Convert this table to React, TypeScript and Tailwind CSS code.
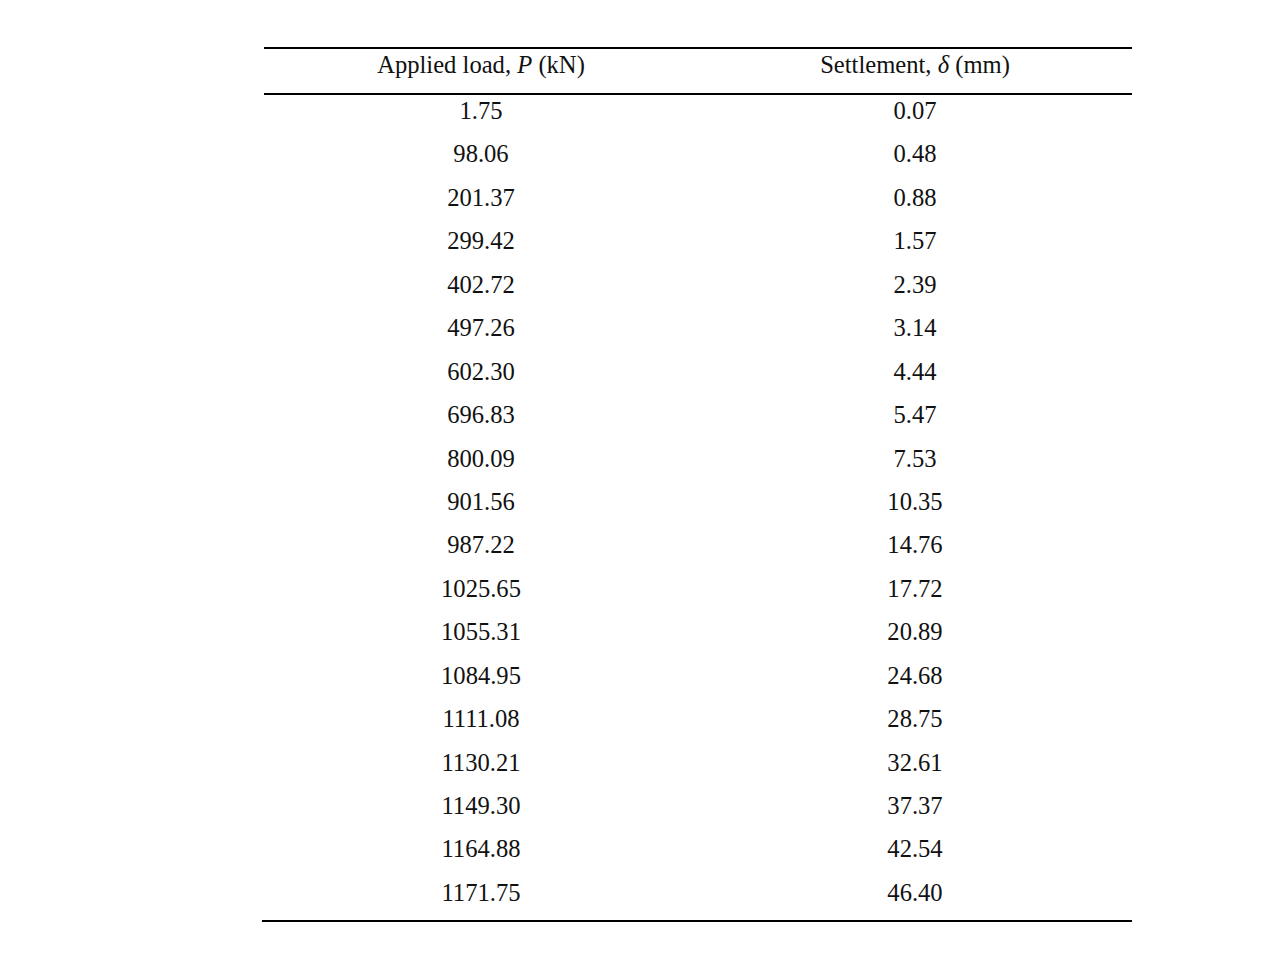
const rows: [string, string][] = [
  ['1.75', '0.07'],
  ['98.06', '0.48'],
  ['201.37', '0.88'],
  ['299.42', '1.57'],
  ['402.72', '2.39'],
  ['497.26', '3.14'],
  ['602.30', '4.44'],
  ['696.83', '5.47'],
  ['800.09', '7.53'],
  ['901.56', '10.35'],
  ['987.22', '14.76'],
  ['1025.65', '17.72'],
  ['1055.31', '20.89'],
  ['1084.95', '24.68'],
  ['1111.08', '28.75'],
  ['1130.21', '32.61'],
  ['1149.30', '37.37'],
  ['1164.88', '42.54'],
  ['1171.75', '46.40'],
];

export default function App() {
  return (
    <div className="min-h-[957px] w-[1284px] bg-white pt-[47px] text-[#111] font-['Liberation_Serif','Times_New_Roman',serif] text-[24.6px] leading-[30px]">
      <div className="ml-[264px] w-[868px]">
        <div className="grid grid-cols-2 border-t-2 border-b-2 border-black pt-[1px] pb-[13px] text-center">
          <div>
            Applied load, <i>P</i> (kN)
          </div>
          <div>
            Settlement, <i>δ</i> (mm)
          </div>
        </div>
        <div>
          {rows.map(([p, d]) => (
            <div key={p} className="grid grid-cols-2 h-[43.45px] pt-[1px] text-center">
              <div>{p}</div>
              <div>{d}</div>
            </div>
          ))}
        </div>
        <div className="-ml-[2px] h-[2px] w-[870px] bg-black" />
      </div>
    </div>
  );
}
